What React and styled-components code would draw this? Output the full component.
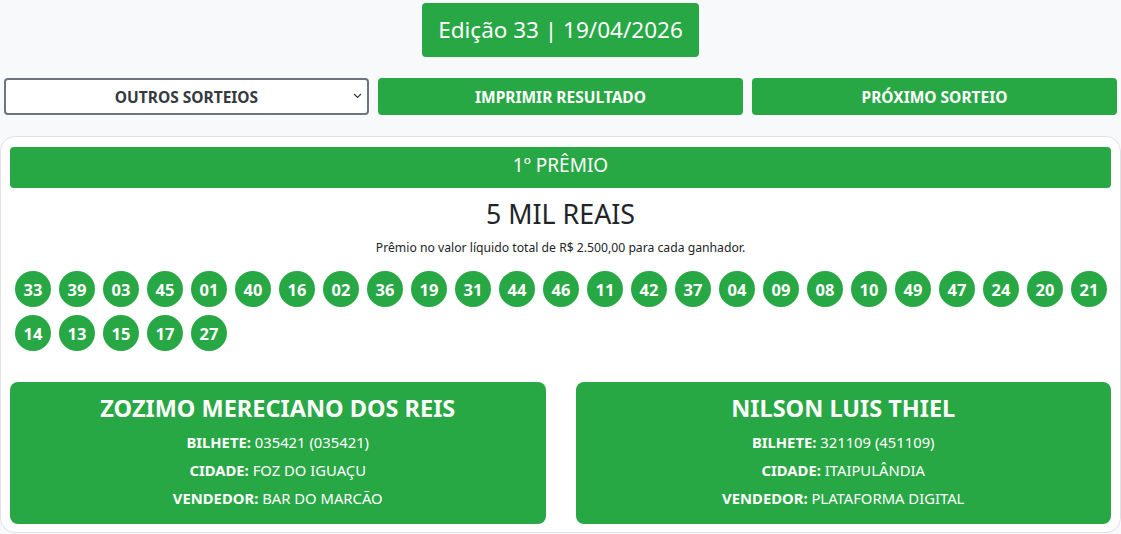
import React from 'react';
import styled, { createGlobalStyle } from 'styled-components';

const GREEN = '#28a745';
const FONT = '"Noto Sans", "Open Sans", sans-serif';

const GlobalStyle = createGlobalStyle`
	* { box-sizing: border-box; }
	body {
		margin: 0;
		background-color: #f8f9fa;
		font-family: ${FONT};
		color: #212529;
	}
`;

const Page = styled.div`
	display: flex;
	flex-direction: column;
	align-items: center;
	padding-top: 3px;
`;

const EditionBadge = styled.div`
	width: 277px;
	height: 54px;
	display: flex;
	align-items: center;
	justify-content: center;
	padding-bottom: 2px;
	background-color: ${GREEN};
	color: #fff;
	font-size: 22.5px;
	border-radius: 4px;
`;

const Toolbar = styled.div`
	width: 100%;
	display: grid;
	grid-template-columns: repeat(3, 1fr);
	gap: 9px;
	padding: 0 4px;
	margin-top: 21px;
`;

const SelectWrap = styled.div`
	position: relative;
	height: 37px;
`;

const Select = styled.select`
	width: 100%;
	height: 100%;
	appearance: none;
	background: #fff;
	border: 2px solid #6c757d;
	border-radius: 4px;
	font-family: ${FONT};
	font-size: 15.5px;
	font-weight: 700;
	color: #343a40;
	text-align: center;
	text-align-last: center;
	padding: 0 24px;
`;

const Chevron = styled.svg`
	position: absolute;
	right: 7px;
	top: 15px;
	pointer-events: none;
`;

const ActionButton = styled.button`
	height: 37px;
	border: none;
	border-radius: 4px;
	background-color: ${GREEN};
	color: #fff;
	font-family: ${FONT};
	font-size: 15.5px;
	font-weight: 700;
	text-transform: uppercase;
`;

const ResultCard = styled.div`
	width: 100%;
	margin-top: 21px;
	background: #fff;
	border: 1px solid #dee2e6;
	border-radius: 15px;
	padding: 10px 9px 8px;
`;

const PrizeHeader = styled.div`
	height: 41px;
	display: flex;
	align-items: center;
	justify-content: center;
	padding-bottom: 5px;
	background-color: ${GREEN};
	color: #fff;
	font-size: 19px;
	border-radius: 4px;
`;

const PrizeValue = styled.h2`
	margin: 10px 0 0;
	text-align: center;
	font-size: 26.8px;
	font-weight: 400;
	line-height: 32px;
`;

const PrizeNote = styled.p`
	margin: 10px 0 0;
	text-align: center;
	font-size: 12.2px;
	line-height: 16px;
`;

const Balls = styled.div`
	display: flex;
	flex-wrap: wrap;
	gap: 8px;
	padding: 0 2px 0 5px;
	margin-top: 15px;
`;

const Ball = styled.span`
	width: 36px;
	height: 36px;
	border-radius: 50%;
	background-color: ${GREEN};
	color: #fff;
	font-size: 16.5px;
	font-weight: 700;
	display: flex;
	align-items: center;
	justify-content: center;
`;

const Winners = styled.div`
	display: grid;
	grid-template-columns: 1fr 1fr;
	gap: 30px;
	margin-top: 31px;
`;

const WinnerCard = styled.div`
	height: 142px;
	background-color: ${GREEN};
	color: #fff;
	border-radius: 8px;
	display: flex;
	flex-direction: column;
	align-items: center;
	padding-top: 10px;
`;

const WinnerName = styled.h3`
	margin: 0 0 4px;
	font-size: 23.5px;
	font-weight: 700;
	line-height: 32px;
`;

const WinnerLine = styled.div`
	font-size: 14.8px;
	line-height: 28px;

	b { font-weight: 700; }
`;

const numbers = ['33', '39', '03', '45', '01', '40', '16', '02', '36', '19', '31', '44', '46', '11', '42', '37', '04', '09', '08', '10', '49', '47', '24', '20', '21', '14', '13', '15', '17', '27'];

const winners = [
	{ name: 'ZOZIMO MERECIANO DOS REIS', ticket: '035421 (035421)', city: 'FOZ DO IGUAÇU', seller: 'BAR DO MARCÃO' },
	{ name: 'NILSON LUIS THIEL', ticket: '321109 (451109)', city: 'ITAIPULÂNDIA', seller: 'PLATAFORMA DIGITAL' },
];

const App = () => {
	return (
		<>
			<GlobalStyle />
			<Page>
				<EditionBadge>Edição 33 | 19/04/2026</EditionBadge>

				<Toolbar>
					<SelectWrap>
						<Select defaultValue="">
							<option value="">OUTROS SORTEIOS</option>
						</Select>
						<Chevron width="9" height="6" viewBox="0 0 9 6">
							<path d="M1 1l3.5 3.5L8 1" fill="none" stroke="#343a40" strokeWidth="1.2" />
						</Chevron>
					</SelectWrap>
					<ActionButton>Imprimir resultado</ActionButton>
					<ActionButton>Próximo sorteio</ActionButton>
				</Toolbar>

				<ResultCard>
					<PrizeHeader>1º PRÊMIO</PrizeHeader>
					<PrizeValue>5 MIL REAIS</PrizeValue>
					<PrizeNote>Prêmio no valor líquido total de R$ 2.500,00 para cada ganhador.</PrizeNote>

					<Balls>
						{numbers.map(n => <Ball key={n}>{n}</Ball>)}
					</Balls>

					<Winners>
						{winners.map(w => (
							<WinnerCard key={w.name}>
								<WinnerName>{w.name}</WinnerName>
								<WinnerLine><b>BILHETE:</b> {w.ticket}</WinnerLine>
								<WinnerLine><b>CIDADE:</b> {w.city}</WinnerLine>
								<WinnerLine><b>VENDEDOR:</b> {w.seller}</WinnerLine>
							</WinnerCard>
						))}
					</Winners>
				</ResultCard>
			</Page>
		</>
	);
};

export default App;
